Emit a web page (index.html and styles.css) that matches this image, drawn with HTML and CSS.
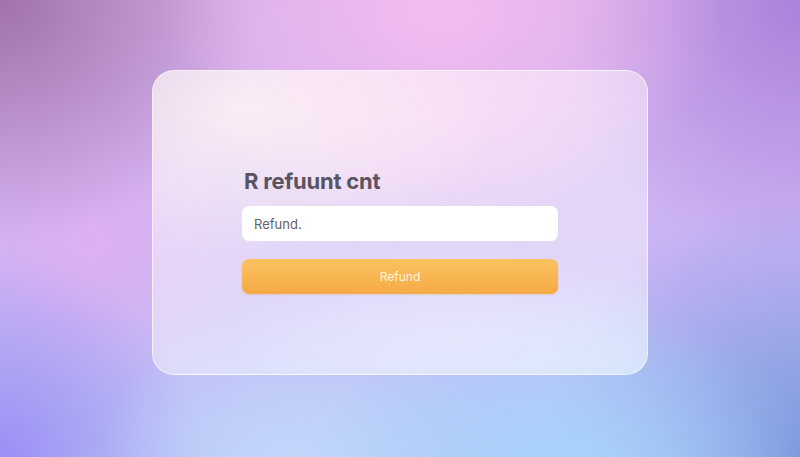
FILE: index.html
```html
<!DOCTYPE html>
<html lang="en">
<head>
<meta charset="utf-8">
<title>Refund</title>
<link rel="stylesheet" href="styles.css">
</head>
<body>
<main class="stage">
  <section class="card">
    <div class="form">
      <h1 class="title">R refuunt cnt</h1>
      <div class="field">Refund.</div>
      <button class="btn" type="button">Refund</button>
    </div>
  </section>
</main>
</body>
</html>
```
FILE: styles.css
```css
* { box-sizing: border-box; }
html, body { margin: 0; padding: 0; }
body {
  width: 800px;
  height: 457px;
  overflow: hidden;
  font-family: Inter, "Noto Sans", sans-serif;
}
.stage {
  width: 800px;
  height: 457px;
  display: flex;
  justify-content: center;
  align-items: flex-start;
  padding-top: 70px;
  background:
    radial-gradient(ellipse 280px 220px at 440px 10px, rgba(246,188,242,0.95), rgba(246,188,242,0) 100%),
    radial-gradient(ellipse 260px 170px at 560px 470px, rgba(166,212,250,1), rgba(166,212,250,0) 100%),
    radial-gradient(ellipse 200px 160px at 300px 460px, rgba(196,216,252,0.9), rgba(196,216,252,0) 100%),
    radial-gradient(ellipse 260px 240px at 0px 0px, rgba(158,110,168,0.95), rgba(158,110,168,0) 100%),
    radial-gradient(ellipse 260px 260px at 800px 457px, rgba(120,148,220,0.95), rgba(120,148,220,0) 100%),
    radial-gradient(ellipse 200px 200px at 0px 457px, rgba(154,140,244,0.95), rgba(154,140,244,0) 100%),
    radial-gradient(ellipse 240px 260px at 800px 0px, rgba(166,128,220,0.95), rgba(166,128,220,0) 100%),
    radial-gradient(ellipse 180px 160px at 90px 240px, rgba(222,176,240,0.9), rgba(222,176,240,0) 100%),
    linear-gradient(180deg, #d6aee8 0%, #c8b4f4 60%, #b8c6f6 100%);
}
.card {
  width: 496px;
  height: 305px;
  border-radius: 22px;
  border: 1px solid rgba(255,255,255,0.65);
  background:
    radial-gradient(ellipse 260px 150px at 90px 40px, rgba(255,244,244,0.75), rgba(255,244,244,0) 100%),
    radial-gradient(ellipse 220px 130px at 280px 40px, rgba(255,226,244,0.5), rgba(255,226,244,0) 100%),
    radial-gradient(ellipse 220px 100px at 300px 270px, rgba(236,240,255,0.55), rgba(236,240,255,0) 100%),
    radial-gradient(ellipse 160px 100px at 480px 290px, rgba(220,240,255,0.4), rgba(220,240,255,0) 100%),
    rgba(255,255,255,0.45);
  display: flex;
  justify-content: center;
  padding-top: 96px;
}
.form {
  width: 316px;
  display: flex;
  flex-direction: column;
}
.title {
  margin: 0 0 11px 2px;
  font-size: 22px;
  line-height: 28px;
  font-weight: 700;
  color: #5a5462;
  letter-spacing: -0.2px;
}
.field {
  height: 35px;
  border-radius: 7px;
  background: #ffffff;
  border: 1px solid rgba(255,255,255,0.9);
  display: flex;
  align-items: center;
  padding-left: 11px;
  font-size: 13px;
  color: #626266;
}
.btn {
  margin-top: 18px;
  height: 35px;
  border: none;
  border-radius: 7px;
  background: linear-gradient(180deg, #fbc260 0%, #f5aa45 100%);
  box-shadow: 0 1px 2px rgba(220,150,60,0.25);
  color: #fff6df;
  font-family: Inter, "Noto Sans", sans-serif;
  font-size: 12px;
  padding: 0;
}
```
